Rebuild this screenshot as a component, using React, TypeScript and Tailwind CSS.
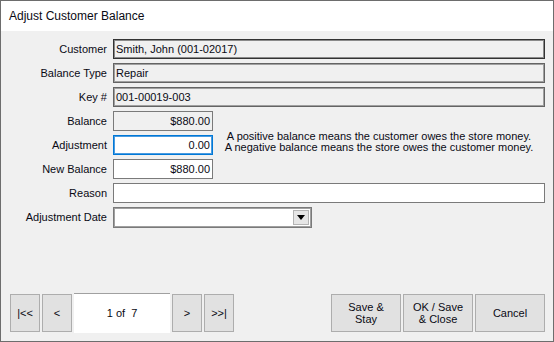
import React from "react";

const font = { fontFamily: '"Liberation Sans", Arial, sans-serif' };

function Label({ children }: { children: React.ReactNode }) {
  return (
    <div className="w-[106px] shrink-0 text-right text-[11px] leading-[20px] text-[#0a0a14]">
      {children}
    </div>
  );
}

function Row({ label, children }: { label: string; children: React.ReactNode }) {
  return (
    <div className="flex h-[20px] items-center gap-[6px]">
      <Label>{label}</Label>
      {children}
    </div>
  );
}

function NavBtn({ children }: { children: React.ReactNode }) {
  return (
    <button className="flex h-[38px] w-[30px] items-center justify-center border border-[#adadad] bg-[#e1e1e1] text-[11px] text-[#0a0a14]">
      {children}
    </button>
  );
}

function ActionBtn({ children }: { children: React.ReactNode }) {
  return (
    <button className="flex h-[38px] w-[70px] flex-col items-center justify-center border border-[#adadad] bg-[#e1e1e1] text-[11px] leading-[12px] text-[#0a0a14]">
      {children}
    </button>
  );
}

export default function App() {
  return (
    <div
      className="flex h-[342px] w-[554px] flex-col border border-[#6d6d6d] bg-[#f0f0f0]"
      style={font}
    >
      {/* Title */}
      <div className="flex h-[30px] shrink-0 items-center bg-white pl-[8px] text-[12px] text-[#0a0a14]">
        Adjust Customer Balance
      </div>

      {/* Form */}
      <div className="flex flex-col gap-[4px] pr-[8px] pt-[8px]">
        <Row label="Customer">
          <div className="h-[20px] flex-1 border border-[#333] bg-[#f0f0f0] pl-[2px] text-[11px] leading-[18px] text-[#0a0a14] shadow-[inset_0_0_0_1px_#8a8a8a]">
            Smith, John (001-02017)
          </div>
        </Row>
        <Row label="Balance Type">
          <div className="h-[20px] flex-1 border border-[#646464] bg-[#f0f0f0] pl-[2px] text-[11px] leading-[18px] text-[#0a0a14] shadow-[inset_0_0_0_1px_#a0a0a0]">
            Repair
          </div>
        </Row>
        <Row label="Key #">
          <div className="h-[20px] flex-1 border border-[#646464] bg-[#f0f0f0] pl-[2px] text-[11px] leading-[18px] text-[#0a0a14] shadow-[inset_0_0_0_1px_#a0a0a0]">
            001-00019-003
          </div>
        </Row>

        <div className="flex items-center">
          <div className="flex flex-col gap-[4px]">
            <Row label="Balance">
              <div className="h-[20px] w-[100px] border border-[#7a7a7a] bg-[#f0f0f0] pr-[2px] text-right text-[11px] leading-[18px] text-[#0a0a14]">
                $880.00
              </div>
            </Row>
            <Row label="Adjustment">
              <div className="h-[20px] w-[100px] border border-[#0078d7] bg-white pr-[2px] text-right text-[11px] leading-[18px] text-[#0a0a14] shadow-[inset_0_0_0_1px_#4a9be0]">
                0.00
              </div>
            </Row>
            <Row label="New Balance">
              <div className="h-[20px] w-[100px] border border-[#7a7a7a] bg-white pr-[2px] text-right text-[11px] leading-[18px] text-[#0a0a14]">
                $880.00
              </div>
            </Row>
          </div>
          <div className="mb-[7px] flex-1 text-center text-[11px] leading-[11px] text-[#0a0a14]">
            A positive balance means the customer owes the store money.
            <br />
            A negative balance means the store owes the customer money.
          </div>
        </div>

        <Row label="Reason">
          <div className="h-[20px] flex-1 border border-[#7a7a7a] bg-white" />
        </Row>
        <Row label="Adjustment Date">
          <div className="flex h-[21px] w-[199px] items-stretch border border-[#7a7a7a] bg-white p-[1px] shadow-[inset_0_0_0_1px_#a0a0a0]">
            <div className="flex-1" />
            <div className="my-[1px] mr-[1px] flex w-[16px] items-center justify-center border border-[#b4b4b4] bg-[#e6e6e6]">
              <svg width="8" height="5" viewBox="0 0 8 5">
                <polygon points="0,0 8,0 4,5" fill="#000" />
              </svg>
            </div>
          </div>
        </Row>
      </div>

      {/* Bottom bar */}
      <div className="mt-auto flex items-center justify-between pb-[8px] pl-[9px] pr-[8px]">
        <div className="flex items-center gap-[2px]">
          <NavBtn>|&lt;&lt;</NavBtn>
          <NavBtn>&lt;</NavBtn>
          <div className="flex h-[40px] w-[96px] items-center justify-center border-t border-[#a0a0a0] bg-white text-[11px] text-[#0a0a14]">
            1 of&nbsp;&nbsp;7
          </div>
          <NavBtn>&gt;</NavBtn>
          <NavBtn>&gt;&gt;|</NavBtn>
        </div>
        <div className="flex items-center gap-[2px]">
          <ActionBtn>
            <span>Save &amp;</span>
            <span>Stay</span>
          </ActionBtn>
          <ActionBtn>
            <span>OK / Save</span>
            <span>&amp; Close</span>
          </ActionBtn>
          <ActionBtn>
            <span>Cancel</span>
          </ActionBtn>
        </div>
      </div>
    </div>
  );
}
